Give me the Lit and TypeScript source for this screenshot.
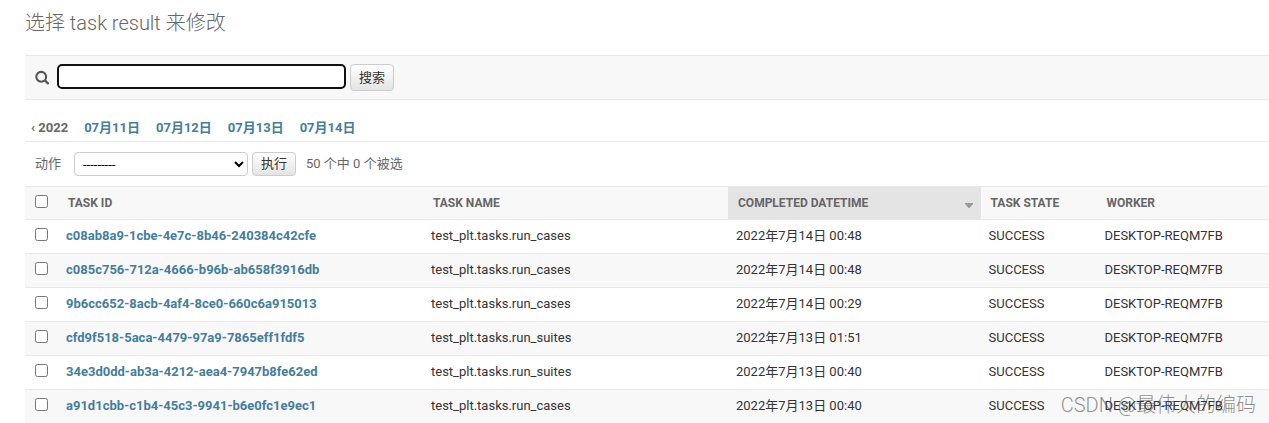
import { LitElement, html, css } from "lit";
import { customElement, state } from "lit/decorators.js";
import { classMap } from "lit/directives/class-map.js";

interface TaskResult {
  id: string;
  name: string;
  completed: string;
  state: string;
  worker: string;
}

const RESULTS: TaskResult[] = [
  ["c08ab8a9-1cbe-4e7c-8b46-240384c42cfe", "run_cases", "2022年7月14日 00:48"],
  ["c085c756-712a-4666-b96b-ab658f3916db", "run_cases", "2022年7月14日 00:48"],
  ["9b6cc652-8acb-4af4-8ce0-660c6a915013", "run_cases", "2022年7月14日 00:29"],
  ["cfd9f518-5aca-4479-97a9-7865eff1fdf5", "run_suites", "2022年7月13日 01:51"],
  ["34e3d0dd-ab3a-4212-aea4-7947b8fe62ed", "run_suites", "2022年7月13日 00:40"],
  ["a91d1cbb-c1b4-45c3-9941-b6e0fc1e9ec1", "run_cases", "2022年7月13日 00:40"],
].map(([id, task, completed]) => ({
  id,
  name: `test_plt.tasks.${task}`,
  completed,
  state: "SUCCESS",
  worker: "DESKTOP-REQM7FB",
}));

const DAYS = ["07月11日", "07月12日", "07月13日", "07月14日"];

const COLUMNS = [
  { label: "Task ID", cls: "col-id" },
  { label: "Task Name", cls: "col-name" },
  { label: "Completed DateTime", cls: "col-date", sorted: true },
  { label: "Task State", cls: "col-state" },
  { label: "Worker", cls: "col-worker" },
];

@customElement("app-root")
export class AppRoot extends LitElement {
  static styles = css`
    :host {
      display: block;
      position: relative;
      padding-left: 25px;
      background: #fff;
      color: #333;
      font-family: Roboto, "Noto Sans CJK SC", sans-serif;
      font-size: 13px;
      line-height: 16px;
    }
    * {
      box-sizing: border-box;
    }
    a {
      color: #447e9b;
      text-decoration: none;
    }
    .title {
      margin: 0;
      padding: 11px 0 20px;
      font-size: 20px;
      line-height: 24px;
      font-weight: 300;
      color: #666;
    }
    .search {
      display: flex;
      align-items: flex-start;
      gap: 4px;
      padding: 8px 10px;
      border-top: 1px solid #e8e8e8;
      border-bottom: 1px solid #e8e8e8;
      background: #f8f8f8;
    }
    .search-label {
      display: flex;
      padding: 6px 4px 0 0;
    }
    .search-input {
      width: 289px;
      height: 25px;
      padding: 0 6px;
      border: 2px solid #101010;
      border-radius: 5px;
      outline: none;
      background: #fff;
      font: inherit;
    }
    .button {
      height: 27px;
      padding: 0 8px;
      border: 1px solid #ccc;
      border-radius: 4px;
      background: linear-gradient(#fff, #e4e4e4);
      color: #333;
      font: inherit;
    }
    .dates {
      display: flex;
      gap: 16px;
      margin: 0;
      padding: 20px 6px 5px;
      border-bottom: 1px solid #e8e8e8;
      list-style: none;
      font-weight: 700;
    }
    .dates .back {
      color: #666;
    }
    .actions {
      display: flex;
      align-items: center;
      gap: 4px;
      padding: 10px;
      color: #666;
    }
    .actions-label {
      margin-right: 9px;
    }
    .actions .button,
    .select {
      height: 24px;
    }
    .select {
      width: 174px;
      padding: 0 4px;
      border: 1px solid #ccc;
      border-radius: 4px;
      background: #fff;
      color: #000;
      font: inherit;
    }
    .counter {
      margin-left: 6px;
    }
    .results {
      width: 100%;
      table-layout: fixed;
      border-collapse: separate;
      border-spacing: 0;
    }
    .col-check {
      width: 33px;
    }
    .col-id {
      width: 29.34%;
    }
    .col-name {
      width: 24.52%;
    }
    .col-date {
      width: 20.3%;
    }
    .col-state {
      width: 9.32%;
    }
    th,
    td {
      text-align: left;
      vertical-align: top;
      white-space: nowrap;
      border-bottom: 1px solid #e8e8e8;
    }
    thead th {
      padding: 8px 10px;
      border-top: 1px solid #e8e8e8;
      background: #f8f8f8;
      color: #666;
      font-size: 12px;
      font-weight: 700;
      text-transform: uppercase;
    }
    thead .sorted {
      background: #e4e4e4;
    }
    .head {
      display: flex;
      justify-content: space-between;
      align-items: flex-start;
    }
    .arrow {
      display: block;
      margin: 8px -2px 0 0;
    }
    tbody td,
    tbody th {
      height: 34px;
      padding: 8px;
      font-weight: 400;
    }
    tbody th {
      font-weight: 700;
    }
    tbody tr:nth-child(even) > * {
      background: #f8f8f8;
    }
    tbody tr:last-child > * {
      height: 33px;
      border-bottom: 0;
    }
    thead .check,
    tbody .check {
      padding: 8px 0 0 10px;
    }
    .check input {
      display: block;
      width: 13px;
      height: 13px;
      margin: 0;
    }
    .watermark {
      position: absolute;
      right: 13px;
      bottom: 6px;
      color: rgba(70, 70, 70, 0.6);
      font-size: 20px;
      line-height: 24px;
      font-weight: 300;
      pointer-events: none;
    }
  `;

  @state() private selected = new Set<string>();

  private toggle(id: string) {
    const next = new Set(this.selected);
    next.has(id) ? next.delete(id) : next.add(id);
    this.selected = next;
  }

  private toggleAll(e: Event) {
    const on = (e.target as HTMLInputElement).checked;
    this.selected = new Set(on ? RESULTS.map((r) => r.id) : []);
  }

  render() {
    return html`
      <h1 class="title">选择 task result 来修改</h1>
      <form class="search" role="search" @submit=${(e: Event) => e.preventDefault()}>
        <label class="search-label" for="searchbar" aria-label="搜索">
          <svg width="14" height="16" viewBox="0 0 14 16" fill="none" stroke="#555">
            <circle cx="6.2" cy="6.8" r="4.9" stroke-width="2.1" />
            <path d="M9.7 10.2 13.6 14" stroke-width="2.3" />
          </svg>
        </label>
        <input class="search-input" id="searchbar" type="text" />
        <button class="button" type="submit">搜索</button>
      </form>
      <ul class="dates">
        <li><a class="back" href="#2022">‹ 2022</a></li>
        ${DAYS.map((d) => html`<li><a href="#${d}">${d}</a></li>`)}
      </ul>
      <div class="actions">
        <label class="actions-label" for="action">动作</label>
        <select class="select" id="action">
          <option>---------</option>
        </select>
        <button class="button" type="button">执行</button>
        <span class="counter">50 个中 ${this.selected.size} 个被选</span>
      </div>
      <table class="results">
        <thead>
          <tr>
            <th class="check col-check">
              <input type="checkbox" aria-label="全选" @change=${this.toggleAll} />
            </th>
            ${COLUMNS.map(
              (c) => html`<th class=${classMap({ [c.cls]: true, sorted: !!c.sorted })} scope="col">
                <div class="head">
                  <span>${c.label}</span>
                  ${c.sorted
                    ? html`<svg class="arrow" width="8" height="5" viewBox="0 0 8 5">
                        <path d="M0 0h8v1L4.5 5h-1L0 1z" fill="#999" />
                      </svg>`
                    : ""}
                </div>
              </th>`
            )}
          </tr>
        </thead>
        <tbody>
          ${RESULTS.map(
            (r) => html`<tr>
              <td class="check">
                <input
                  type="checkbox"
                  aria-label=${r.id}
                  .checked=${this.selected.has(r.id)}
                  @change=${() => this.toggle(r.id)}
                />
              </td>
              <th scope="row"><a href="#${r.id}">${r.id}</a></th>
              <td>${r.name}</td>
              <td>${r.completed}</td>
              <td>${r.state}</td>
              <td>${r.worker}</td>
            </tr>`
          )}
        </tbody>
      </table>
      <div class="watermark">CSDN @最伟大的编码</div>
    `;
  }
}
